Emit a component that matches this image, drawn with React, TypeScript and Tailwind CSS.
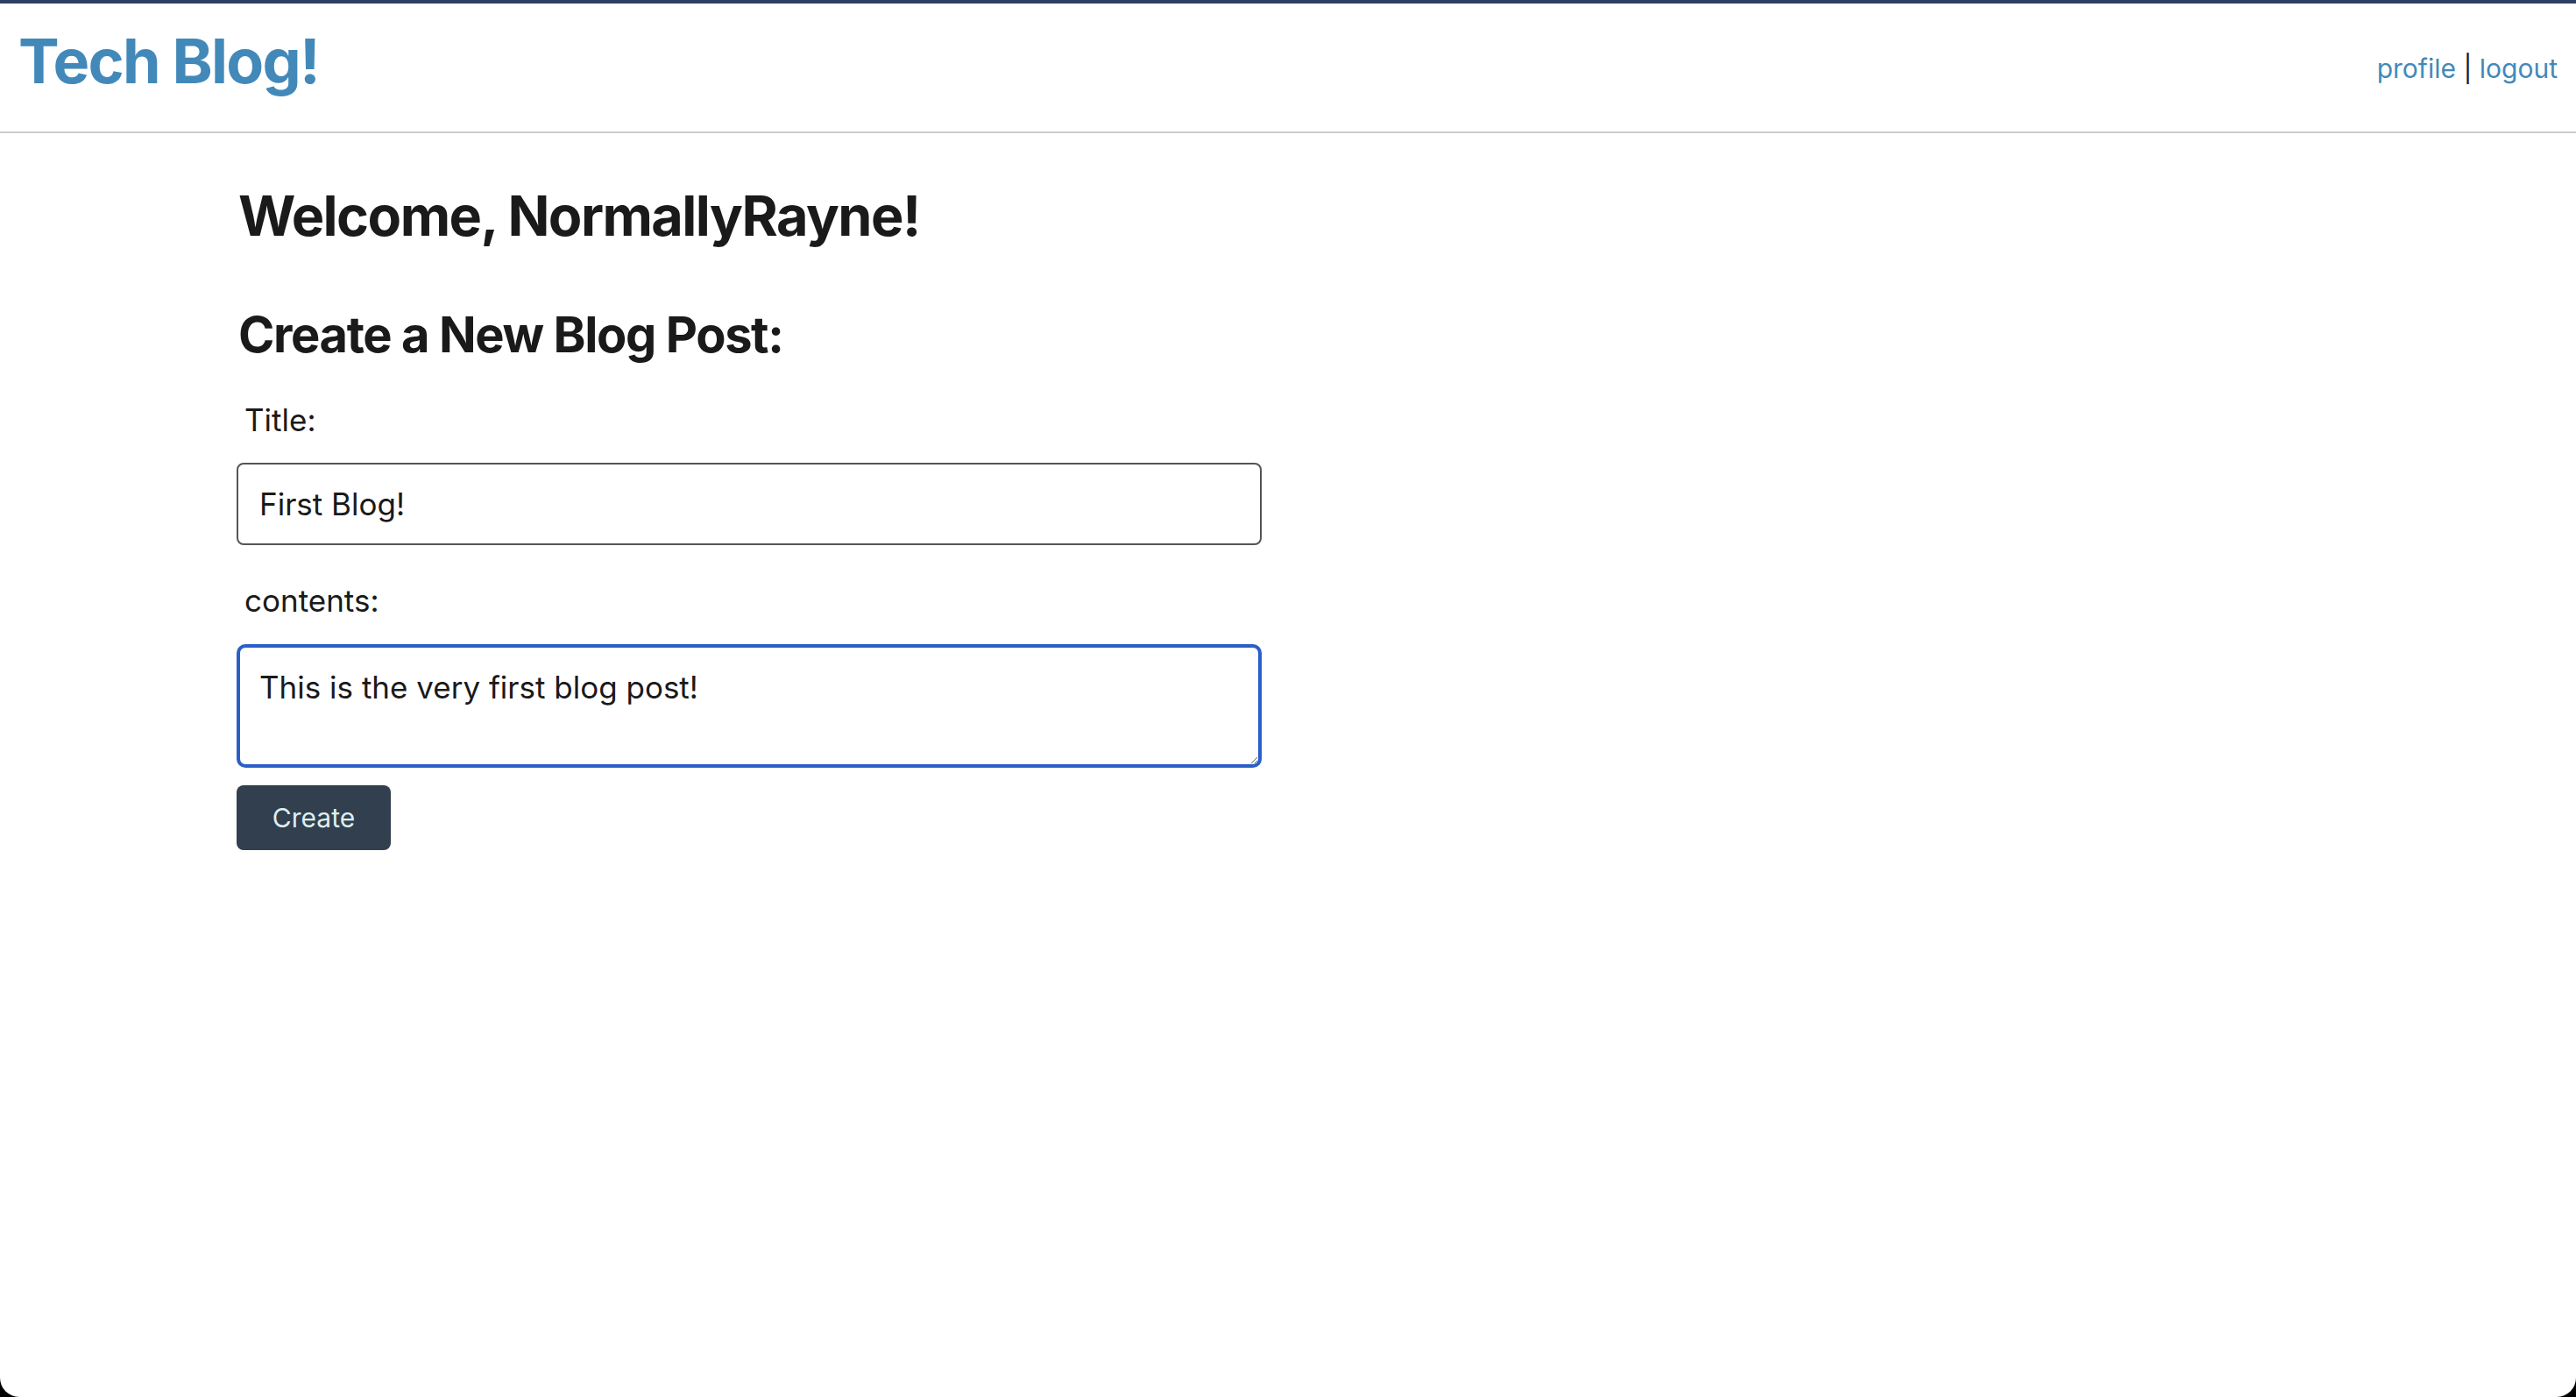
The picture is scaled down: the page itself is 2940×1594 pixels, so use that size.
import React from "react";

const font = { fontFamily: "Inter, 'Noto Sans', sans-serif" };

const Header = () => (
  <header className="flex h-[148px] items-start justify-between border-b-2 border-[#cccccc] px-[21px]">
    <h1 className="mt-[31px] text-[70px] leading-none font-bold tracking-tight text-[#4289ba]">Tech Blog!</h1>
    <nav className="mt-[59px] text-[30px] leading-none text-[#1a1a1a]">
      <a href="#" className="text-[#4289ba]">
        profile
      </a>{" "}
      |{" "}
      <a href="#" className="text-[#4289ba]">
        logout
      </a>
    </nav>
  </header>
);

const NewPostForm = () => {
  const [title, setTitle] = React.useState("First Blog!");
  const [contents, setContents] = React.useState("This is the very first blog post!");
  const contentsRef = React.useRef<HTMLTextAreaElement>(null);

  // focus the contents box with the caret at the end
  React.useEffect(() => {
    const el = contentsRef.current;
    if (!el) return;
    el.focus();
    el.setSelectionRange(el.value.length, el.value.length);
  }, []);

  return (
    <form className="flex w-[1170px] flex-col items-start" onSubmit={(e) => e.preventDefault()}>
      <label htmlFor="title" className="ml-[9px] text-[35px] leading-[46px] text-[#1a1a1a]">
        Title:
      </label>
      <input
        id="title"
        value={title}
        onChange={(e) => setTitle(e.target.value)}
        className="mt-[26px] h-[94px] w-full rounded-[8px] border-2 border-[#555555] px-[24px] text-[35px] text-[#1a1a1a] outline-none"
      />
      <label htmlFor="contents" className="mt-[40px] ml-[9px] text-[35px] leading-[46px] text-[#1a1a1a]">
        contents:
      </label>
      <textarea
        id="contents"
        ref={contentsRef}
        value={contents}
        onChange={(e) => setContents(e.target.value)}
        className="mt-[27px] h-[141px] w-full resize-y rounded-[10px] border-4 border-[#2b5fc8] px-[22px] pt-[23px] text-[35px] leading-[44px] text-[#1a1a1a] caret-black outline-none"
      />
      <button
        type="submit"
        className="mt-[20px] h-[74px] w-[176px] rounded-[8px] bg-[#323f4f] text-[30px] text-[#dfeeee]"
      >
        Create
      </button>
    </form>
  );
};

export default function App() {
  return (
    <div className="h-screen w-full bg-black" style={font}>
      <div className="flex h-full flex-col overflow-hidden rounded-b-[22px] border-t-4 border-[#2d3f62] bg-white">
        <Header />
        <main className="pl-[270px]">
          <h2 className="mt-[63px] ml-[2px] text-[63px] leading-none font-bold tracking-tight text-[#1a1a1a]">
            Welcome, NormallyRayne!
          </h2>
          <h3 className="mt-[76px] ml-[2px] text-[56px] leading-none font-bold tracking-tight text-[#1a1a1a]">
            Create a New Blog Post:
          </h3>
          <div className="mt-[46px]">
            <NewPostForm />
          </div>
        </main>
      </div>
    </div>
  );
}
